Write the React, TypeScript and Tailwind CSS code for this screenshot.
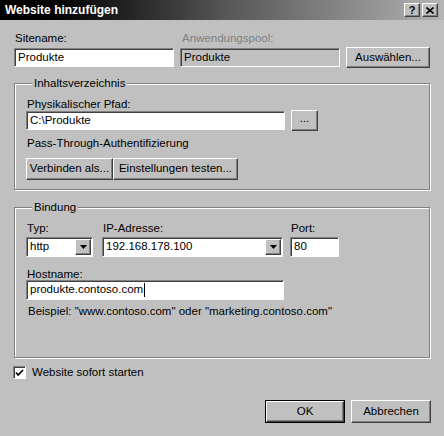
import React from 'react'

const font = { fontFamily: '"Liberation Sans", Arial, sans-serif' }

function Sunken({ children, className = '', gray = false }: { children?: React.ReactNode; className?: string; gray?: boolean }) {
  return (
    <div
      className={`flex items-center border border-t-[#808080] border-l-[#808080] border-r-white border-b-white shadow-[inset_1px_1px_0_#404040] pl-[3px] ${gray ? 'bg-[#c0c0c0]' : 'bg-white'} ${className}`}
    >
      {children}
    </div>
  )
}

function Btn({ children, className = '' }: { children: React.ReactNode; className?: string }) {
  return (
    <div
      className={`flex items-center justify-center border border-t-white border-l-white border-r-[#404040] border-b-[#404040] shadow-[inset_-1px_-1px_0_#808080] bg-[#c0c0c0] ${className}`}
    >
      {children}
    </div>
  )
}

function Arrow() {
  return (
    <Btn className="w-[16px] h-[16px] mr-[1px] ml-auto">
      <svg width="7" height="4" viewBox="0 0 7 4">
        <path d="M0 0h7L3.5 4z" fill="#000" />
      </svg>
    </Btn>
  )
}

function Group({ title, children, className = '' }: { title: string; children: React.ReactNode; className?: string }) {
  return (
    <fieldset className={`border border-[#808080] shadow-[1px_1px_0_#fff,inset_1px_1px_0_#fff] ${className}`}>
      <legend className="ml-[6px] px-[2px] bg-[#c0c0c0] leading-[13px]">{title}</legend>
      {children}
    </fieldset>
  )
}

export default function App() {
  return (
    <div className="w-[444px] h-[436px] bg-[#c0c0c0] text-[11.5px] text-black overflow-hidden" style={font}>
      <div className="h-[20px] flex items-center pl-[5px] pr-[6px] bg-gradient-to-r from-[#000] via-[#555] to-[#b4b4b4]">
        <span className="text-white font-bold text-[12px]">Website hinzufügen</span>
        <div className="ml-auto flex">
          <Btn className="w-[16px] h-[14px] text-[11px] font-bold leading-none">?</Btn>
          <Btn className="w-[16px] h-[14px] ml-[2px]">
            <svg width="8" height="7" viewBox="0 0 8 7">
              <path d="M0.5 0.5l7 6M7.5 0.5l-7 6" stroke="#000" strokeWidth="1.6" />
            </svg>
          </Btn>
        </div>
      </div>

      <div className="px-[14px]">
        <div className="flex mt-[11px]">
          <div className="w-[160px]">
            <div className="h-[14px] leading-[14px] pl-[1px]">Sitename:</div>
            <Sunken className="mt-[3px] h-[19px]">Produkte</Sunken>
          </div>
          <div className="w-[160px] ml-[6px]">
            <div className="h-[14px] leading-[14px] pl-[2px] text-[#808080]">Anwendungspool:</div>
            <Sunken gray className="mt-[3px] h-[19px]">Produkte</Sunken>
          </div>
          <Btn className="w-[84px] h-[21px] ml-[6px] mt-[16px]">Auswählen...</Btn>
        </div>

        <Group title="Inhaltsverzeichnis" className="mt-[9px] h-[113px] pl-[11px]">
          <div className="mt-[7px] h-[14px] leading-[14px] pl-[1px]">Physikalischer Pfad:</div>
          <div className="flex items-start mt-[-1px]">
            <Sunken className="w-[259px] h-[19px] mt-[1px]">C:\Produkte</Sunken>
            <Btn className="w-[27px] h-[21px] ml-[6px] pb-[3px]">...</Btn>
          </div>
          <div className="mt-[5px] h-[14px] leading-[14px] pl-[1px]">Pass-Through-Authentifizierung</div>
          <div className="flex mt-[8px]">
            <Btn className="w-[87px] h-[22px]">Verbinden als...</Btn>
            <Btn className="w-[125px] h-[22px]">Einstellungen testen...</Btn>
          </div>
        </Group>

        <Group title="Bindung" className="mt-[11px] h-[157px] pl-[11px]">
          <div className="flex mt-[7px]">
            <div className="w-[67px]">
              <div className="h-[14px] leading-[14px] pl-[1px]">Typ:</div>
              <Sunken className="mt-[2px] h-[20px]">
                http
                <Arrow />
              </Sunken>
            </div>
            <div className="w-[181px] ml-[9px]">
              <div className="h-[14px] leading-[14px] pl-[1px]">IP-Adresse:</div>
              <Sunken className="mt-[2px] h-[20px]">
                192.168.178.100
                <Arrow />
              </Sunken>
            </div>
            <div className="w-[49px] ml-[7px]">
              <div className="h-[14px] leading-[14px] pl-[1px]">Port:</div>
              <Sunken className="mt-[2px] h-[20px]">80</Sunken>
            </div>
          </div>
          <div className="mt-[10px] h-[14px] leading-[14px] pl-[1px]">Hostname:</div>
          <Sunken className="mt-[-1px] w-[258px] h-[20px]">
            produkte.contoso.com<span className="inline-block w-[1px] h-[14px] bg-black ml-[1px]" />
          </Sunken>
          <div className="mt-[4px] h-[14px] leading-[14px] pl-[2px]">Beispiel: "www.contoso.com" oder "marketing.contoso.com"</div>
        </Group>

        <div className="flex items-center mt-[6px] ml-[-1px]">
          <div className="w-[13px] h-[13px] bg-white border border-t-[#808080] border-l-[#808080] border-r-white border-b-white shadow-[inset_1px_1px_0_#404040] flex items-center justify-center">
            <svg width="9" height="8" viewBox="0 0 9 8">
              <path d="M1 3.5l2.2 2.5L8 1" stroke="#000" strokeWidth="1.8" fill="none" />
            </svg>
          </div>
          <span className="ml-[6px]">Website sofort starten</span>
        </div>

        <div className="flex justify-end mt-[19px] mr-[-1px]">
          <div className="border border-black">
            <Btn className="w-[78px] h-[21px]">OK</Btn>
          </div>
          <Btn className="w-[80px] h-[23px] ml-[6px]">Abbrechen</Btn>
        </div>
      </div>
    </div>
  )
}
